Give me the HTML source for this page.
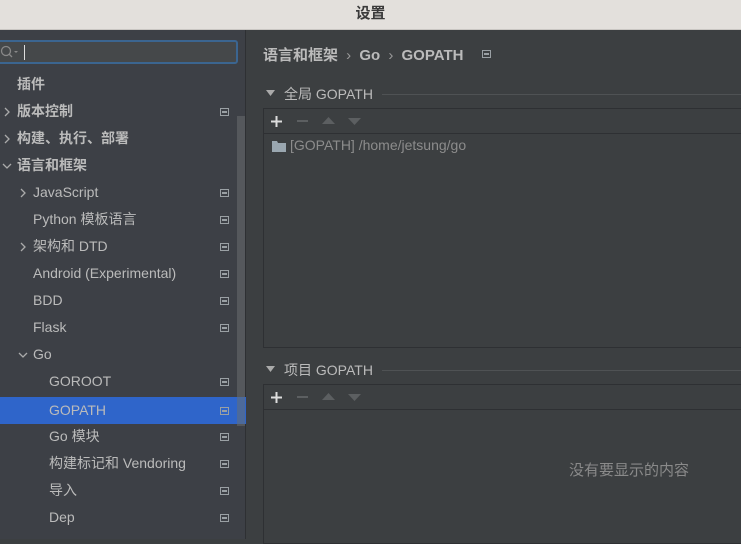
<!DOCTYPE html>
<html><head><meta charset="utf-8"><style>
*{margin:0;padding:0;box-sizing:border-box}
body{width:741px;height:539px;overflow:hidden;background:#3c3f41;font-family:"Liberation Sans","Noto Sans CJK SC",sans-serif;color:#bbbbbb;font-size:14px;position:relative}
.title{position:absolute;left:0;top:0;width:741px;height:30px;background:#e3e0dc;border-bottom:1px solid #c9c6c2;text-align:center;line-height:28px;font-weight:bold;color:#3a3a3a;font-size:15px}
.left{position:absolute;left:0;top:30px;width:246px;height:509px;background:#3d4046;border-right:1px solid #2e3033}
.search{position:absolute;left:-3px;top:10px;width:241px;height:24px;border:2px solid #3b6590;border-radius:3px;background:#45484a}
.search .caret{position:absolute;left:25px;top:3px;width:1px;height:15px;background:#ddd}
.row{position:absolute;left:0;width:237px;height:27px;line-height:27px;white-space:nowrap}
.row.sel{background:#2f65ca;width:246px}
.row .ic{position:absolute;left:220px;top:10px;width:9px;height:8px;border:1px solid #9aa0a4}
.row .ic::after{content:"";position:absolute;left:1px;top:2px;width:5px;height:2px;background:#9aa0a4}
.arr{position:absolute;top:9px}
.b{font-weight:bold}
.sb{position:absolute;left:237px;top:116px;width:8px;height:310px;background:#55585c}
.abs{position:absolute;white-space:nowrap}
.box{position:absolute;left:263px;width:480px;border:1px solid #2e3033;background:#3c3f41}
.tb{height:25px;border-bottom:1px solid #2e3033;position:relative}
.line{position:absolute;height:1px;background:#4f5254}
</style></head><body>
<div class="title">设置</div>
<div class="left">
<div class="search"><svg style="position:absolute;left:1px;top:3px" width="20" height="14"><circle cx="6" cy="6" r="4.5" fill="none" stroke="#888" stroke-width="1.3"/><line x1="9" y1="9" x2="12" y2="12" stroke="#888" stroke-width="1.3"/><path d="M14 6 L18 6 L16 8Z" fill="#888"/></svg><div class="caret"></div></div>
</div>
<div class="sb"></div>
<svg width="0" height="0" style="position:absolute"><defs>
<symbol id="r" viewBox="0 0 8 10"><path d="M2 1 L6 5 L2 9" fill="none" stroke="#aaa" stroke-width="1.3"/></symbol>
<symbol id="d" viewBox="0 0 10 8"><path d="M1 2 L5 6 L9 2" fill="none" stroke="#aaa" stroke-width="1.3"/></symbol>
</defs></svg>
<div class="row b" style="top:71px"><span class="abs" style="left:17px">插件</span></div>
<div class="row b" style="top:98px"><svg class="arr" style="left:3px" width="8" height="10"><use href="#r"/></svg><span class="abs" style="left:17px">版本控制</span><i class="ic"></i></div>
<div class="row b" style="top:125px"><svg class="arr" style="left:3px" width="8" height="10"><use href="#r"/></svg><span class="abs" style="left:17px">构建、执行、部署</span></div>
<div class="row b" style="top:152px"><svg class="arr" style="left:2px;top:10px" width="10" height="8"><use href="#d"/></svg><span class="abs" style="left:17px">语言和框架</span></div>
<div class="row" style="top:179px"><svg class="arr" style="left:19px" width="8" height="10"><use href="#r"/></svg><span class="abs" style="left:33px">JavaScript</span><i class="ic"></i></div>
<div class="row" style="top:206px"><span class="abs" style="left:33px">Python 模板语言</span><i class="ic"></i></div>
<div class="row" style="top:233px"><svg class="arr" style="left:19px" width="8" height="10"><use href="#r"/></svg><span class="abs" style="left:33px">架构和 DTD</span><i class="ic"></i></div>
<div class="row" style="top:260px"><span class="abs" style="left:33px">Android (Experimental)</span><i class="ic"></i></div>
<div class="row" style="top:287px"><span class="abs" style="left:33px">BDD</span><i class="ic"></i></div>
<div class="row" style="top:314px"><span class="abs" style="left:33px">Flask</span><i class="ic"></i></div>
<div class="row" style="top:341px"><svg class="arr" style="left:18px;top:10px" width="10" height="8"><use href="#d"/></svg><span class="abs" style="left:33px">Go</span></div>
<div class="row" style="top:368px"><span class="abs" style="left:49px">GOROOT</span><i class="ic"></i></div>
<div class="row sel" style="top:397px"><span class="abs" style="left:49px">GOPATH</span><i class="ic"></i></div>
<div class="sb" style="top:397px;height:27px;background:#4d6a9a"></div>
<div class="row" style="top:423px"><span class="abs" style="left:49px">Go 模块</span><i class="ic"></i></div>
<div class="row" style="top:450px"><span class="abs" style="left:49px">构建标记和 Vendoring</span><i class="ic"></i></div>
<div class="row" style="top:477px"><span class="abs" style="left:49px">导入</span><i class="ic"></i></div>
<div class="row" style="top:504px"><span class="abs" style="left:49px">Dep</span><i class="ic"></i></div>

<div class="abs b" style="left:263px;top:44px;font-size:15px">语言和框架 <span style="font-weight:normal;color:#999;margin:0 4px">›</span> Go <span style="font-weight:normal;color:#999;margin:0 4px">›</span> GOPATH</div>
<div class="row" style="top:40px;left:262px;width:0"><i class="ic" style="left:220px"></i></div>
<svg class="abs" style="left:266px;top:90px" width="9" height="6"><path d="M0 0H9L4.5 6Z" fill="#aaa"/></svg>
<div class="abs" style="left:284px;top:84px">全局 GOPATH</div>
<div class="line" style="left:382px;top:94px;width:360px"></div>
<div class="box" style="top:108px;height:240px"><div class="tb">
<svg class="abs" style="left:7px;top:7px" width="11" height="11"><path d="M5.5 0V11M0 5.5H11" stroke="#ddd" stroke-width="2"/></svg>
<svg class="abs" style="left:33px;top:11px" width="11" height="2"><path d="M0 1H11" stroke="#5c5f61" stroke-width="2"/></svg>
<svg class="abs" style="left:58px;top:8px" width="13" height="7"><path d="M0 7H13L6.5 0Z" fill="#5c5f61"/></svg>
<svg class="abs" style="left:84px;top:9px" width="13" height="7"><path d="M0 0H13L6.5 7Z" fill="#5c5f61"/></svg>
</div>
<svg class="abs" style="left:8px;top:31px" width="15" height="12"><path d="M0 1h5l1 2h8v9H0z" fill="#9aa7b0"/></svg>
<span class="abs" style="left:26px;top:28px;color:#8c8c8c">[GOPATH] /home/jetsung/go</span></div>
<svg class="abs" style="left:266px;top:366px" width="9" height="6"><path d="M0 0H9L4.5 6Z" fill="#aaa"/></svg>
<div class="abs" style="left:284px;top:360px">项目 GOPATH</div>
<div class="line" style="left:382px;top:370px;width:360px"></div>
<div class="box" style="top:384px;height:160px"><div class="tb">
<svg class="abs" style="left:7px;top:7px" width="11" height="11"><path d="M5.5 0V11M0 5.5H11" stroke="#ddd" stroke-width="2"/></svg>
<svg class="abs" style="left:33px;top:11px" width="11" height="2"><path d="M0 1H11" stroke="#5c5f61" stroke-width="2"/></svg>
<svg class="abs" style="left:58px;top:8px" width="13" height="7"><path d="M0 7H13L6.5 0Z" fill="#5c5f61"/></svg>
<svg class="abs" style="left:84px;top:9px" width="13" height="7"><path d="M0 0H13L6.5 7Z" fill="#5c5f61"/></svg>
</div></div>
<div class="abs" style="left:569px;top:459px;color:#8a8a8a;font-size:15px">没有要显示的内容</div>
</body></html>
